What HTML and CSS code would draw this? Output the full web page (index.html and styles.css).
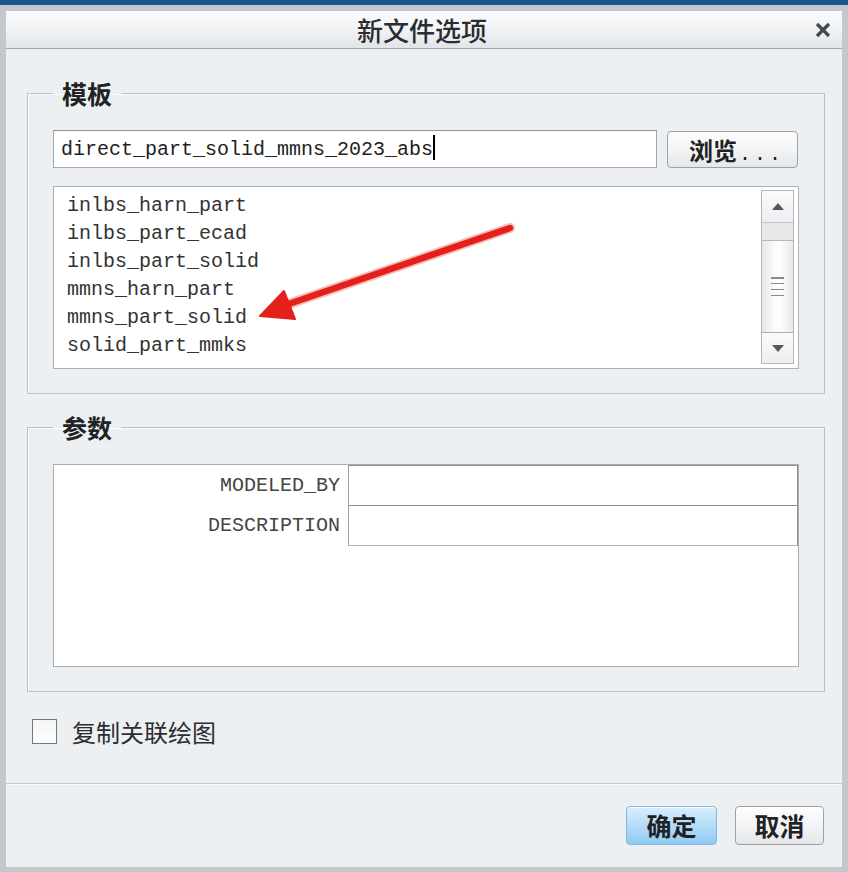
FILE: index.html
```html
<html>
<head>
<meta charset="utf-8">
<link rel="stylesheet" href="styles.css">
</head>
<body>
<div class="window">
    <div class="titlebar">
        <span class="title">新文件选项</span>
        <svg class="close" width="16" height="16" viewBox="0 0 16 16">
            <path d="M2 2 L14 14 M14 2 L2 14" stroke="#45484c" stroke-width="3.2" stroke-linecap="butt"/>
        </svg>
    </div>
    <div class="content">
        <fieldset class="group">
            <legend>模板</legend>
            <div class="row">
                <div class="field">direct_part_solid_mmns_2023_abs<span class="caret"></span></div>
                <button class="btn browse">浏览<span class="dots">...</span></button>
            </div>
            <div class="listbox">
                <ul class="items">
                    <li>inlbs_harn_part</li>
                    <li>inlbs_part_ecad</li>
                    <li>inlbs_part_solid</li>
                    <li>mmns_harn_part</li>
                    <li>mmns_part_solid</li>
                    <li>solid_part_mmks</li>
                </ul>
                <div class="scrollbar">
                    <div class="sb-btn up"><span class="tri-up"></span></div>
                    <div class="sb-track"></div>
                    <div class="sb-thumb"><span class="grip"></span></div>
                    <div class="sb-btn down"><span class="tri-down"></span></div>
                </div>
            </div>
        </fieldset>
        <fieldset class="group second">
            <legend>参数</legend>
            <div class="params">
                <div class="pname">MODELED_BY</div>
                <div class="pvalue"></div>
                <div class="pname">DESCRIPTION</div>
                <div class="pvalue last"></div>
            </div>
        </fieldset>
        <label class="check">
            <span class="box"></span>
            <span class="check-text">复制关联绘图</span>
        </label>
    </div>
    <div class="footer">
        <button class="btn ok">确定</button>
        <button class="btn cancel">取消</button>
    </div>
</div>
<svg class="arrow" width="848" height="872" viewBox="0 0 848 872">
    <line x1="510" y1="223" x2="280" y2="302" stroke="rgba(232,32,28,0.3)" stroke-width="10" stroke-linecap="round"/>
    <line x1="510" y1="223" x2="280" y2="302" stroke="#e5201b" stroke-width="6.5" stroke-linecap="round"/>
    <polygon points="260,311 284,286 295,314" fill="#e5201b" stroke="#e5201b" stroke-width="2" stroke-linejoin="round"/>
</svg>
</body>
</html>
```

FILE: styles.css
```css
body {
    margin: 0;
    height: 872px;
    box-sizing: border-box;
    padding: 6px 6px 5px 6px;
    border-top: 5px solid #1b5890;
    background: #c4c8cc;
    font-family: "Noto Sans CJK SC", sans-serif;
    color: #333;
    position: relative;
}

.window {
    height: 100%;
    display: flex;
    flex-direction: column;
    background: #edf0f3;
}

.titlebar {
    height: 37px;
    flex: none;
    border-bottom: 1px solid #a2a6ab;
    background: linear-gradient(to bottom, #fbfcfd 0%, #f2f4f6 45%, #e2e5e8 100%);
    display: flex;
    align-items: center;
    justify-content: center;
    position: relative;
}
.title {
    font-size: 26px;
    line-height: 37px;
    color: #2a2c2f;
    font-weight: 500;
    margin-left: -4px;
}
.close {
    position: absolute;
    right: 11px;
    top: 11px;
}

.content {
    flex: 1;
    padding: 0 17px 0 21px;
    display: flex;
    flex-direction: column;
}

.group {
    margin: 31px 0 0 0;
    padding: 24px 25px 24px 25px;
    border: 1px solid #bcc0c4;
    box-shadow: inset 1px 1px 0 #fafbfc;
    min-width: 0;
}
.group.second {
    margin-top: 20px;
}
.group legend {
    padding: 0 9px;
    font-size: 25px;
    line-height: 26px;
    font-weight: bold;
    color: #222;
}

.row {
    display: flex;
    gap: 10px;
    align-items: flex-start;
}
.field {
    width: 604px;
    height: 38px;
    box-sizing: border-box;
    border: 1px solid #a4a8ad;
    border-top-color: #8f9398;
    background: #fff;
    padding: 2px 0 0 7px;
    font: 20px/34px "Liberation Mono", monospace;
    color: #222;
    white-space: nowrap;
}
.caret {
    display: inline-block;
    width: 2px;
    height: 25px;
    background: #000;
    vertical-align: -5px;
}

.btn {
    font-family: "Noto Sans CJK SC", sans-serif;
    font-weight: bold;
    font-size: 25px;
    color: #1f2124;
    border: 1px solid #9ca1a6;
    border-radius: 4px;
    background: linear-gradient(to bottom, #fdfdfd 0%, #f3f4f5 50%, #e4e6e8 100%);
    box-shadow: inset 0 1px 0 #fff;
    padding: 0;
    cursor: pointer;
    outline: none;
}
.browse {
    width: 131px;
    height: 37px;
    margin-top: 1px;
    font-size: 24px;
    line-height: 35px;
    padding-left: 8px;
}
.dots {
    font: 20px "Liberation Mono", monospace;
    letter-spacing: 3px;
    margin-left: 2px;
}

.listbox {
    margin-top: 18px;
    height: 183px;
    box-sizing: border-box;
    border: 1px solid #aeb2b6;
    background: #fff;
    display: flex;
    justify-content: space-between;
}
.items {
    list-style: none;
    margin: 0;
    padding: 5px 0 0 13px;
    font: 20px/28px "Liberation Mono", monospace;
    color: #333;
}

.scrollbar {
    width: 33px;
    margin: 3px 4px 4px 0;
    box-sizing: border-box;
    border: 1px solid #b4b8bc;
    display: flex;
    flex-direction: column;
    background: #f0f1f2;
}
.sb-btn {
    height: 31px;
    display: flex;
    align-items: center;
    justify-content: center;
    background: linear-gradient(to bottom, #fbfbfc, #eceef0);
}
.sb-btn.up {
    border-bottom: 1px solid #c2c6ca;
}
.sb-btn.down {
    flex: 1;
    border-top: 1px solid #a9adb1;
}
.tri-up {
    width: 0;
    height: 0;
    border-left: 6px solid transparent;
    border-right: 6px solid transparent;
    border-bottom: 7px solid #55595e;
}
.tri-down {
    width: 0;
    height: 0;
    border-left: 6px solid transparent;
    border-right: 6px solid transparent;
    border-top: 7px solid #55595e;
}
.sb-track {
    height: 17px;
    background: #e6e8ea;
    border-bottom: 1px solid #b4b8bc;
}
.sb-thumb {
    height: 91px;
    display: flex;
    align-items: center;
    justify-content: center;
    background: linear-gradient(to right, #e3e5e7 0%, #fbfbfc 40%, #fdfdfd 60%, #e6e8ea 100%);
}
.grip {
    width: 13px;
    height: 19px;
    background: repeating-linear-gradient(to bottom, #878b90 0, #878b90 1.5px, transparent 1.5px, transparent 6px);
}

.params {
    height: 203px;
    box-sizing: border-box;
    border: 1px solid #a9adb1;
    background: #fff;
    display: grid;
    grid-template-columns: 294px 450px;
    grid-auto-rows: min-content;
}
.pname {
    height: 40px;
    text-align: right;
    padding-right: 8px;
    font: 20px/41px "Liberation Mono", monospace;
    color: #444;
}
.pvalue {
    height: 40px;
    box-sizing: border-box;
    border-top: 1px solid #8c9095;
    border-left: 1px solid #9ea2a6;
    border-right: 1px solid #8c9095;
}
.pvalue.last {
    height: 41px;
    border-bottom: 1px solid #b3b7bb;
}

.check {
    display: flex;
    align-items: center;
    gap: 15px;
    margin: 27px 0 0 5px;
    height: 25px;
}
.box {
    width: 25px;
    height: 25px;
    box-sizing: border-box;
    border: 1px solid #72777c;
    background: linear-gradient(to bottom, #f4f5f6, #ffffff);
}
.check-text {
    font-size: 24px;
    color: #2b2d30;
    line-height: 25px;
}

.footer {
    flex: none;
    height: 84px;
    box-sizing: border-box;
    border-top: 1px solid #c6cacd;
    box-shadow: inset 0 1px 0 #f9fafb;
    display: flex;
    justify-content: flex-end;
    align-items: flex-start;
    gap: 18px;
    padding: 22px 18px 0 0;
}
.ok, .cancel {
    height: 39px;
    line-height: 37px;
}
.ok {
    width: 91px;
    border-color: #84b5dc;
    background: linear-gradient(to bottom, #d9effc 0%, #b4dcf7 50%, #8fcbf1 100%);
}
.cancel {
    width: 89px;
}

.arrow {
    position: absolute;
    left: 0;
    top: 0;
    pointer-events: none;
}
```
